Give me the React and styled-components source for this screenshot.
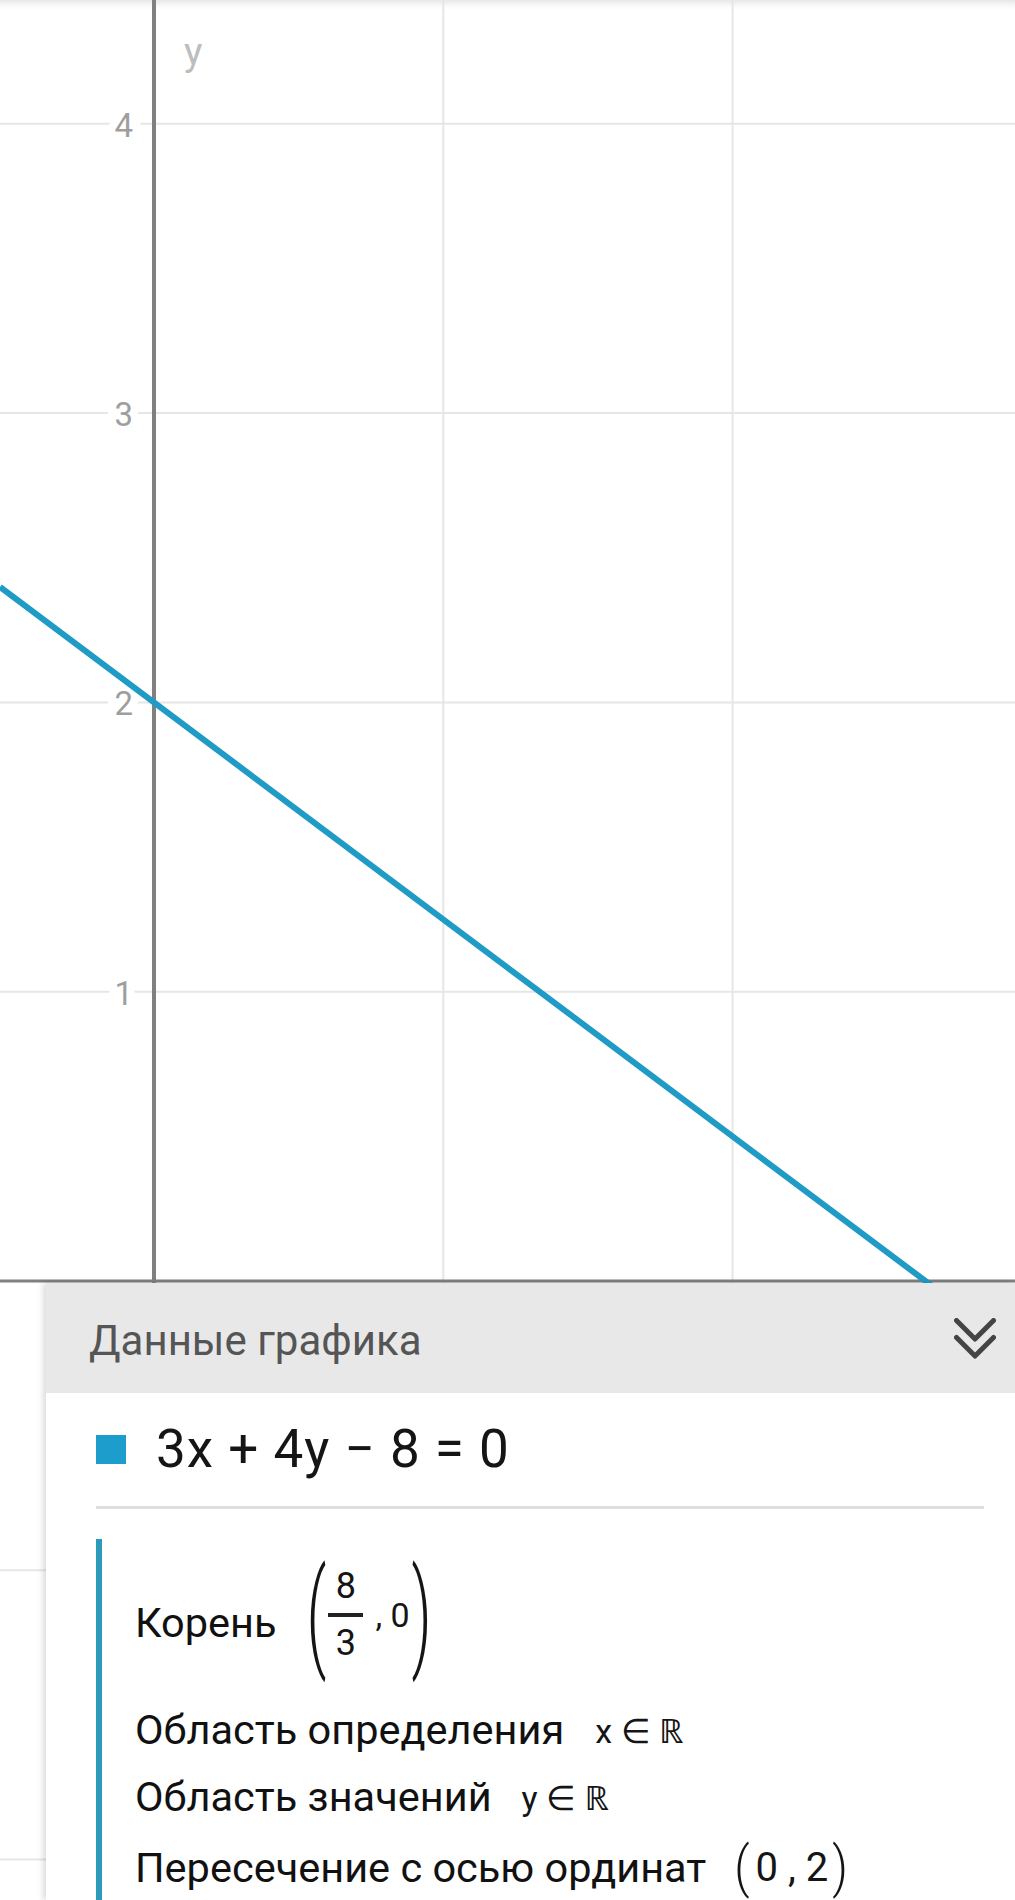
import React from 'react'
import styled, { createGlobalStyle } from 'styled-components'

const GlobalStyle = createGlobalStyle`
  html, body {
    margin: 0;
    padding: 0;
    background: #fff;
  }
  body {
    font-family: Roboto, "Noto Sans", "Liberation Sans", sans-serif;
  }
`

const W = 1015
const H = 1900
const ORIGIN = { x: 154, y: 1281 }
const UNIT = 289.3

const BLUE = '#1f9bc6'

const Screen = styled.div`
  width: ${W}px;
  height: ${H}px;
  display: grid;
  overflow: hidden;
  background: #fff;
  box-shadow: inset 0 10px 8px -8px rgba(0, 0, 0, 0.14);
`

const Graph = styled.svg`
  grid-area: 1 / 1;
  display: block;
`

const Sheet = styled.section`
  grid-area: 1 / 1;
  align-self: end;
  margin-left: 46px;
  height: 617px;
  background: #fff;
  box-shadow: -3px 0 6px rgba(0, 0, 0, 0.14);
  display: flex;
  flex-direction: column;
`

const SheetHeader = styled.header`
  height: 110px;
  flex-shrink: 0;
  background: #e8e8e8;
  display: flex;
  align-items: center;
  justify-content: space-between;
  padding: 0 19px 0 43px;
`

const SheetTitle = styled.h2`
  margin: 0;
  font-size: 42px;
  font-weight: 400;
  color: #555;
  padding-top: 4px;
`

const SheetBody = styled.div`
  padding: 26px 31px 0 50px;
  display: flex;
  flex-direction: column;
`

const EquationRow = styled.div`
  height: 60px;
  display: flex;
  align-items: center;
  gap: 30px;
`

const Swatch = styled.span`
  width: 30px;
  height: 29px;
  background: ${({ color }) => color};
  flex-shrink: 0;
`

const Equation = styled.span`
  font-size: 53px;
  color: #151515;
  letter-spacing: 1px;
  white-space: pre;
`

const Divider = styled.hr`
  margin: 27px 0 0;
  border: none;
  height: 3px;
  background: #dedede;
`

const Details = styled.div`
  margin-top: 30px;
  border-left: 6px solid #2c9ab9;
  padding-left: 33px;
  display: flex;
  flex-direction: column;
`

const Row = styled.div`
  height: ${({ h }) => h}px;
  margin-top: ${({ mt }) => mt || 0}px;
  display: flex;
  align-items: center;
  gap: ${({ gap }) => gap}px;
  font-size: 41.5px;
  color: #111;
  white-space: nowrap;
`

const Label = styled.span`
  padding-top: ${({ drop }) => drop || 0}px;
`

const MathText = styled.span`
  display: inline-flex;
  align-items: center;
  font-size: ${({ size }) => size}px;
  color: #151515;
  white-space: pre;
`

const Paren = styled.span`
  display: inline-block;
  font-size: ${({ size }) => size}px;
  font-weight: 300;
  line-height: 1;
  margin: ${({ m }) => m || '0'};
  transform: scaleY(${({ stretch }) => stretch});
`

const Fraction = styled.span`
  display: inline-flex;
  flex-direction: column;
  align-items: center;
  margin: 0 12px 0 2px;
  font-size: 36px;
  line-height: 1;
`

const FracBar = styled.span`
  width: 35px;
  height: 4px;
  background: #222;
  margin: 9px 0 8px;
`

const Chevrons = () => (
  <svg width="42" height="41" viewBox="0 0 42 41">
    <g fill="none" stroke="#444" strokeWidth="5" strokeLinecap="round" strokeLinejoin="round">
      <path d="M2.5 2.5 L21 21 L39.5 2.5" />
      <path d="M2.5 19.5 L21 38 L39.5 19.5" />
    </g>
  </svg>
)

const px = (x) => ORIGIN.x + x * UNIT
const py = (y) => ORIGIN.y - y * UNIT

const yTicks = [-2, -1, 1, 2, 3, 4]
const xTicks = [1, 2, 3]

// 3x + 4y - 8 = 0  ->  y = (8 - 3x) / 4
const lineY = (x) => (8 - 3 * x) / 4

const GraphCanvas = () => {
  const x0 = (0 - ORIGIN.x) / UNIT
  const x1 = (W - ORIGIN.x) / UNIT
  return (
    <Graph width={W} height={H} viewBox={`0 0 ${W} ${H}`}>
      <g stroke="#e6e6e6" strokeWidth="2">
        {yTicks.map((k) => (
          <line key={'h' + k} x1="0" x2={W} y1={py(k)} y2={py(k)} />
        ))}
        {xTicks.map((k) => (
          <line key={'v' + k} y1="0" y2={H} x1={px(k)} x2={px(k)} />
        ))}
      </g>
      <g
        fontFamily="Roboto, 'Noto Sans', sans-serif"
        fontSize="33"
        fill="#9e9e9e"
        stroke="#fff"
        strokeWidth="16"
        paintOrder="stroke"
        textAnchor="end"
      >
        {yTicks.map((k) => (
          <text key={'l' + k} x="133" y={py(k) + 13}>
            {k < 0 ? '−' + -k : k}
          </text>
        ))}
      </g>
      <text x="184" y="65" fontFamily="Roboto, 'Noto Sans', sans-serif" fontSize="39" fill="#bdbdbd">
        y
      </text>
      <line x1={ORIGIN.x} x2={ORIGIN.x} y1="0" y2={H} stroke="#808080" strokeWidth="4" />
      <line x1="0" x2={W} y1={ORIGIN.y} y2={ORIGIN.y} stroke="#808080" strokeWidth="3" />
      <line
        x1={px(x0)}
        y1={py(lineY(x0))}
        x2={px(x1)}
        y2={py(lineY(x1))}
        stroke={BLUE}
        strokeWidth="6"
      />
    </Graph>
  )
}

const App = () => {
  return (
    <>
      <GlobalStyle />
      <Screen>
        <GraphCanvas />
        <Sheet>
          <SheetHeader>
            <SheetTitle>Данные графика</SheetTitle>
            <Chevrons />
          </SheetHeader>
          <SheetBody>
            <EquationRow>
              <Swatch color="#1c9dcc" />
              <Equation>3x + 4y − 8 = 0</Equation>
            </EquationRow>
            <Divider />
            <Details>
              <Row h={151} gap={30}>
                <Label drop={15}>Корень</Label>
                <MathText size={34}>
                  <Paren size={62} stretch={1.9}>(</Paren>
                  <Fraction>
                    <span>8</span>
                    <FracBar />
                    <span>3</span>
                  </Fraction>
                  {', 0'}
                  <Paren size={62} stretch={1.9} m="0 0 0 2px">)</Paren>
                </MathText>
              </Row>
              <Row h={67} mt={6} gap={31}>
                <Label>Область определения</Label>
                <MathText size={34}>x ∈ ℝ</MathText>
              </Row>
              <Row h={67} gap={30}>
                <Label>Область значений</Label>
                <MathText size={34}>y ∈ ℝ</MathText>
              </Row>
              <Row h={67} mt={4} gap={28}>
                <Label>Пересечение с осью ординат</Label>
                <MathText size={40}>
                  <Paren size={48} stretch={1.15} m="0 6px 0 0">(</Paren>
                  {'0 , 2'}
                  <Paren size={48} stretch={1.15} m="0 0 0 4px">)</Paren>
                </MathText>
              </Row>
            </Details>
          </SheetBody>
        </Sheet>
      </Screen>
    </>
  )
}

export default App
